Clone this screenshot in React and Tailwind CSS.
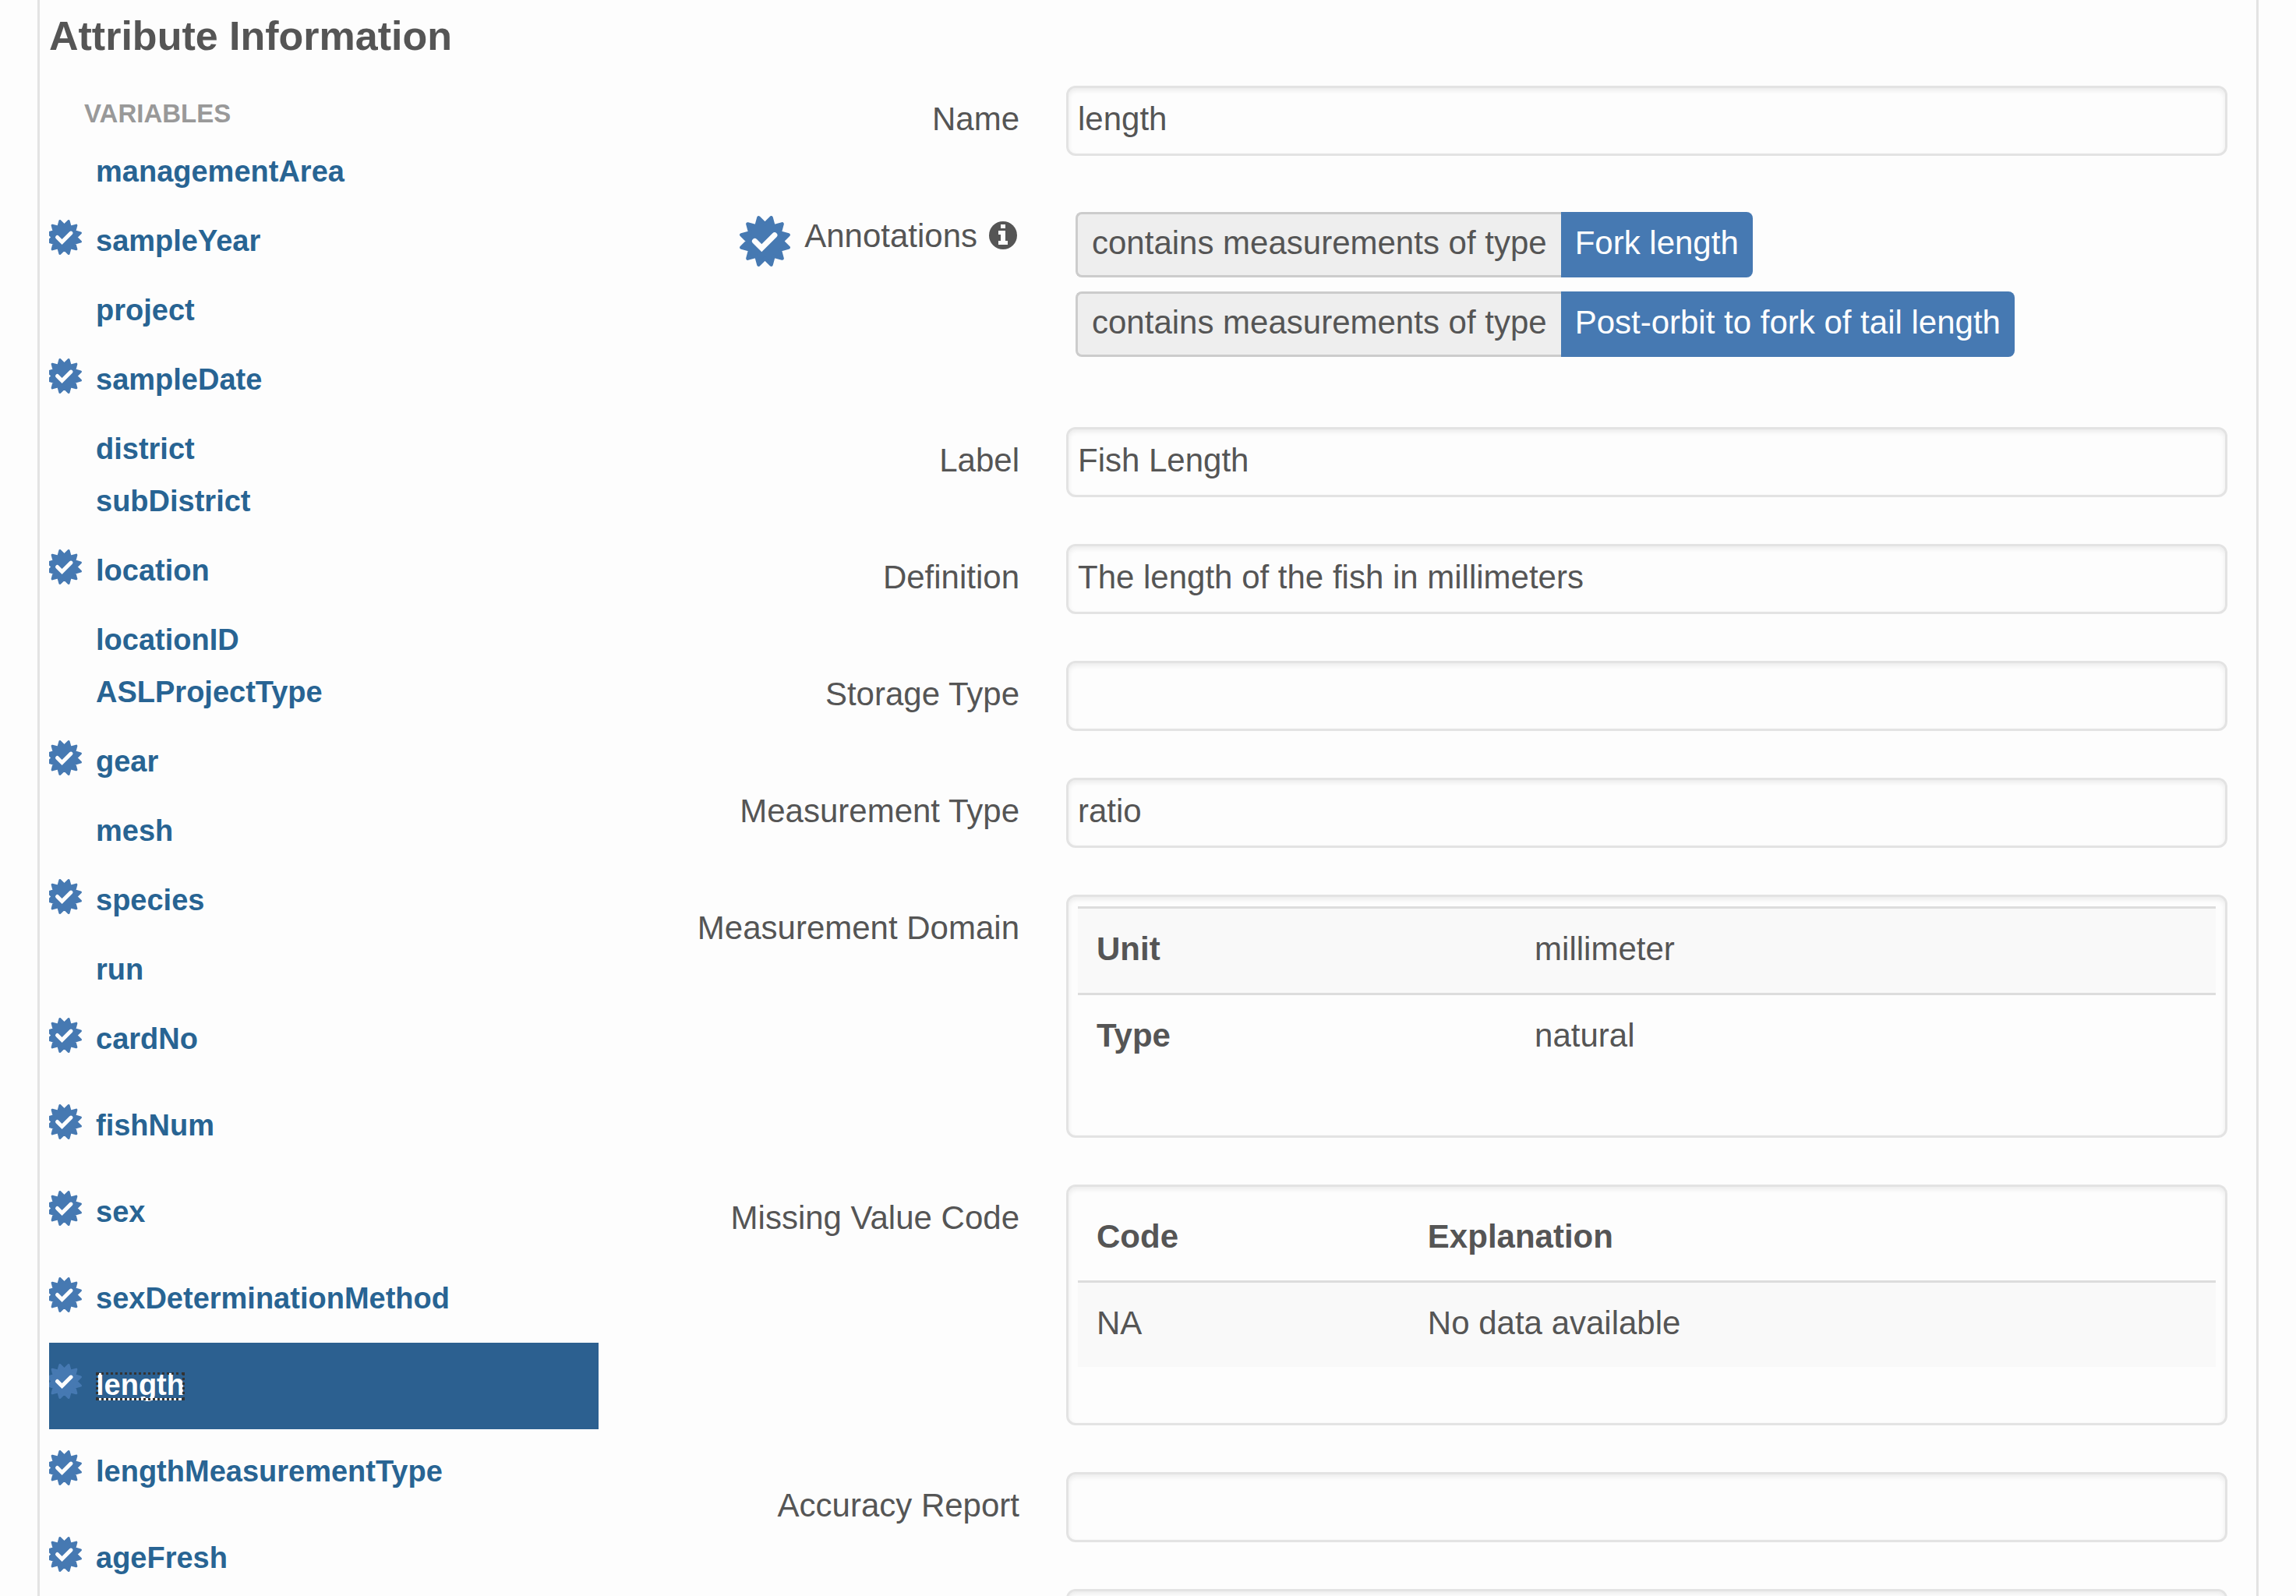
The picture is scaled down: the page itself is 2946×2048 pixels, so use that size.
import React from "react";

const variables = [
  { name: "managementArea" },
  { name: "sampleYear", annotated: true },
  { name: "project" },
  { name: "sampleDate", annotated: true },
  { name: "district" },
  { name: "subDistrict" },
  { name: "location", annotated: true },
  { name: "locationID" },
  { name: "ASLProjectType" },
  { name: "gear", annotated: true },
  { name: "mesh" },
  { name: "species", annotated: true },
  { name: "run" },
  { name: "cardNo", annotated: true },
  { name: "fishNum", annotated: true },
  { name: "sex", annotated: true },
  { name: "sexDeterminationMethod", annotated: true },
  { name: "length", annotated: true, active: true },
  { name: "lengthMeasurementType", annotated: true },
  { name: "ageFresh", annotated: true },
];

const annotations = [
  { property: "contains measurements of type", value: "Fork length" },
  { property: "contains measurements of type", value: "Post-orbit to fork of tail length" },
];

const SPIKES = 12;

// Outline of the seal: alternating tips and notches, rounded off by the stroke's joins.
const sealPoints = Array.from({ length: SPIKES * 2 }, (_, i) => {
  const angle = ((i + 1) * Math.PI) / SPIKES - Math.PI / 2;
  const radius = i % 2 === 0 ? 48 : 34;
  return `${(50 + radius * Math.cos(angle)).toFixed(2)},${(50 + radius * Math.sin(angle)).toFixed(2)}`;
}).join(" ");

function Seal({ className }) {
  return (
    <svg viewBox="0 0 100 100" aria-hidden="true" className={className}>
      <polygon
        points={sealPoints}
        fill="#4679b2"
        stroke="#4679b2"
        strokeWidth="7"
        strokeLinejoin="round"
      />
      <path
        d="M30 50 L43.5 63.5 L69 38"
        fill="none"
        stroke="#fdfdfd"
        strokeWidth="11"
        strokeLinecap="round"
      />
    </svg>
  );
}

function InfoIcon() {
  return (
    <svg viewBox="0 0 36 36" aria-hidden="true" className="size-9 shrink-0">
      <circle cx="18" cy="18" r="18" fill="#555" />
      <path fill="#fdfdfd" d="M15 4h6v5h-6zM12 12h9v13h3v5H12v-5h3v-8h-3z" />
    </svg>
  );
}

function VariableItem({ name, annotated, active }) {
  return (
    <li
      className={`overflow-hidden ${annotated ? "flex pt-[23px] pb-[25px]" : "pt-px pb-[3px] pl-[60px]"} ${active ? "bg-[#2c6090]" : ""}`}
    >
      {annotated && <Seal className="mt-1 mr-[18px] -ml-[3px] size-[45px] shrink-0" />}
      <a
        href={`#${name}`}
        aria-current={active ? "true" : undefined}
        className={
          active
            ? "mt-[15px] mb-3 h-9 border-b-3 border-white leading-[33px] text-white outline-3 -outline-offset-3 outline-dotted outline-[#333]"
            : "text-[#286493]"
        }
      >
        {name}
      </a>
    </li>
  );
}

const boxClass =
  "w-full rounded-xl border-3 border-[#e3e3e3] bg-[#fdfdfd] px-3 shadow-[inset_0_3px_6px_rgba(0,0,0,0.075)]";

function Row({ label, id, children }) {
  const Label = id ? "label" : "span";
  return (
    <div className="grid grid-cols-[540fr_1490fr] gap-[60px]">
      <Label htmlFor={id} className="pt-[13px] text-right">
        {label}
      </Label>
      {children}
    </div>
  );
}

function TextRow({ label, id, value = "" }) {
  return (
    <Row label={label} id={id}>
      <input id={id} type="text" readOnly value={value} className={`${boxClass} h-[90px] pb-1 outline-none`} />
    </Row>
  );
}

const cellClass = "px-6 pt-[22px] pb-[26px] text-left";

export default function App() {
  return (
    <div className="h-screen overflow-hidden bg-[#fdfdfd] px-12 font-['Liberation_Sans',Arial,sans-serif] text-[42px] leading-[60px] text-[#555]">
      <main className="border-x-3 border-[#e3e3e3] pr-[37px] pl-3">
        <h1 className="pt-4 text-[52px] font-bold">Attribute Information</h1>
        <div className="grid grid-cols-[705fr_2090fr] pt-[34px]">
          <nav aria-labelledby="variables-heading" className="pt-1.5 text-[38px] leading-[63px] font-bold">
            <h2 id="variables-heading" className="pl-[45px] text-[33px] leading-[60px] text-[#999]">
              VARIABLES
            </h2>
            <ul className="pt-3">
              {variables.map((variable) => (
                <VariableItem key={variable.name} {...variable} />
              ))}
            </ul>
          </nav>

          <form className="flex flex-col gap-[60px]">
            <TextRow label="Name" id="name" value="length" />

            <div className="grid grid-cols-[540fr_1490fr] gap-[60px]">
              <div className="flex items-start justify-end pt-[13px]">
                <Seal className="mt-1 mr-[18px] size-[65px]" />
                <span>Annotations</span>
                <button type="button" aria-label="About annotations" className="mt-[11px] mr-[3px] ml-[15px]">
                  <InfoIcon />
                </button>
              </div>
              <ul className="flex flex-col gap-[18px] pt-3 pb-[30px] pl-3">
                {annotations.map(({ property, value }) => (
                  <li key={value} className="flex">
                    <span className="rounded-l-lg border-3 border-r-0 border-[#ccc] bg-[#eee] px-[18px] pt-[7px] pb-[11px]">
                      {property}
                    </span>
                    <a href="#annotation" className="rounded-r-lg bg-[#4679b2] px-[18px] pt-[10px] text-white">
                      {value}
                    </a>
                  </li>
                ))}
              </ul>
            </div>

            <TextRow label="Label" id="label" value="Fish Length" />
            <TextRow label="Definition" id="definition" value="The length of the fish in millimeters" />
            <TextRow label="Storage Type" id="storage-type" />
            <TextRow label="Measurement Type" id="measurement-type" value="ratio" />

            <Row label="Measurement Domain">
              <div className={`${boxClass} pt-3 pb-[72px]`}>
                <table aria-label="Measurement Domain" className="w-full table-fixed">
                  <colgroup>
                    <col className="w-[38.5%]" />
                    <col />
                  </colgroup>
                  <tbody>
                    <tr className="border-t-3 border-[#ddd] bg-[#f9f9f9]">
                      <th scope="row" className={cellClass}>Unit</th>
                      <td className={cellClass}>millimeter</td>
                    </tr>
                    <tr className="border-t-3 border-[#ddd]">
                      <th scope="row" className={cellClass}>Type</th>
                      <td className={cellClass}>natural</td>
                    </tr>
                  </tbody>
                </table>
              </div>
            </Row>

            <Row label="Missing Value Code">
              <div className={`${boxClass} pt-3 pb-[72px]`}>
                <table aria-label="Missing Value Code" className="w-full table-fixed">
                  <colgroup>
                    <col className="w-[29.1%]" />
                    <col />
                  </colgroup>
                  <thead>
                    <tr>
                      <th scope="col" className={cellClass}>Code</th>
                      <th scope="col" className={cellClass}>Explanation</th>
                    </tr>
                  </thead>
                  <tbody>
                    <tr className="border-t-3 border-[#ddd] bg-[#f9f9f9]">
                      <td className={cellClass}>NA</td>
                      <td className={cellClass}>No data available</td>
                    </tr>
                  </tbody>
                </table>
              </div>
            </Row>

            <TextRow label="Accuracy Report" id="accuracy-report" />
            <TextRow label="" id="coverage" />
          </form>
        </div>
      </main>
    </div>
  );
}
